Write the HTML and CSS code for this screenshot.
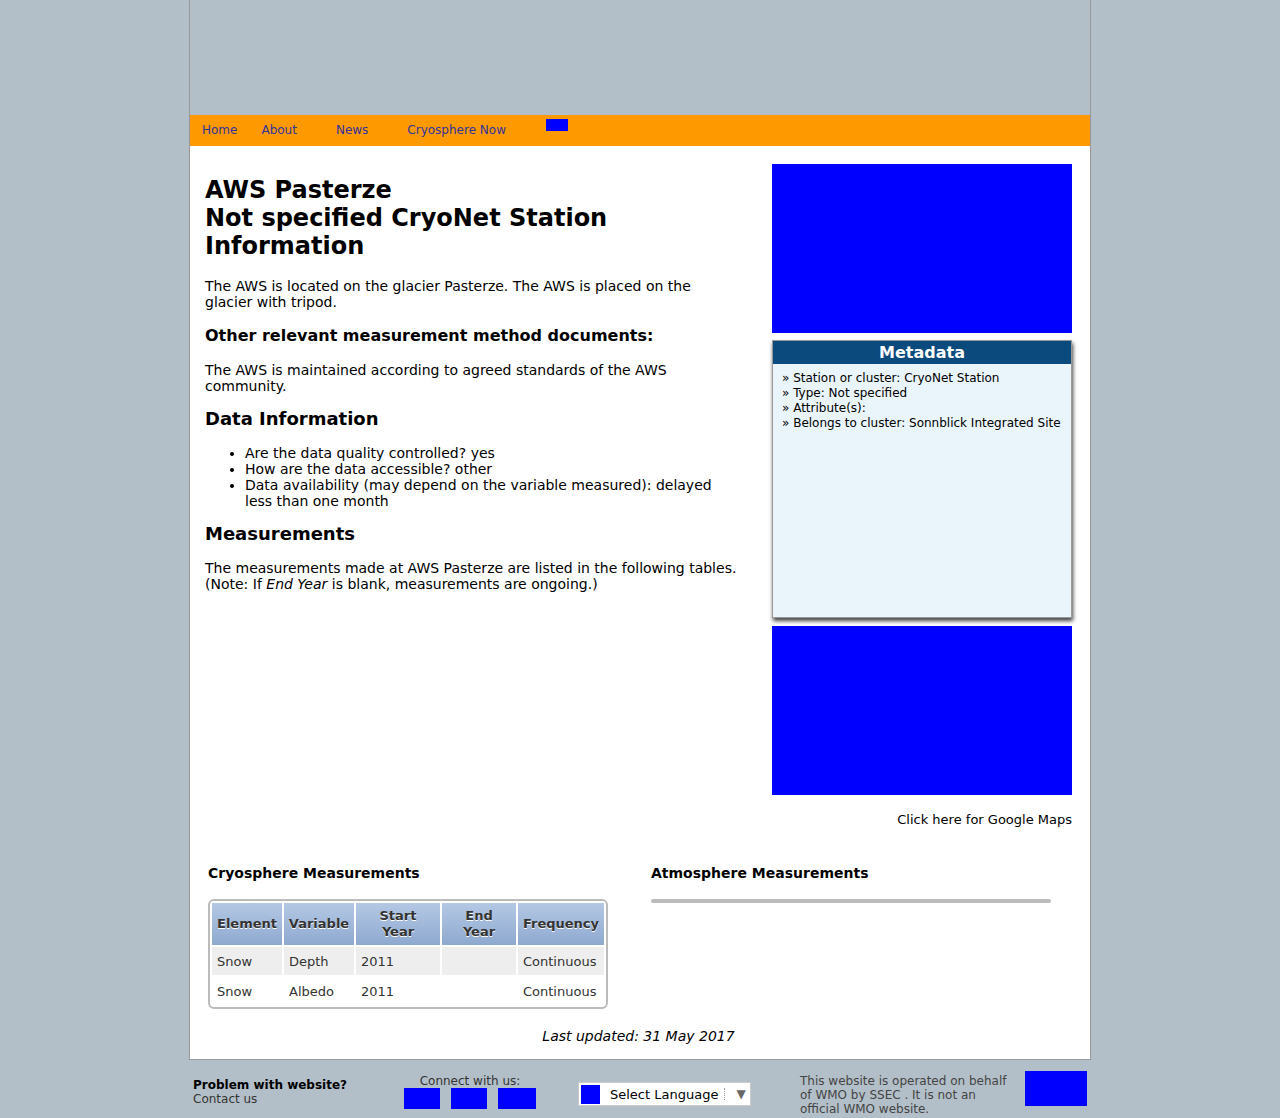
FILE: index.html
```html
<!DOCTYPE html>
<html>
<head>
<meta charset="utf-8">
<title>AWS Pasterze</title>
<link rel="stylesheet" href="styles.css">
</head>
<body>
<div class="page">
  <div class="header"></div>
  <div class="nav">
    <a class="nav-home" href="#">Home</a>
    <a class="nav-about" href="#">About</a>
    <a class="nav-news" href="#">News</a>
    <a class="nav-cryo" href="#">Cryosphere Now</a>
    <span class="nav-box"></span>
  </div>
  <div class="content">
    <div class="main">
      <div class="left">
        <h1>AWS Pasterze<br>Not specified CryoNet Station Information</h1>
        <p>The AWS is located on the glacier Pasterze. The AWS is placed on the glacier with tripod.</p>
        <h3>Other relevant measurement method documents:</h3>
        <p>The AWS is maintained according to agreed standards of the AWS community.</p>
        <h2>Data Information</h2>
        <ul>
          <li>Are the data quality controlled? yes</li>
          <li>How are the data accessible? other</li>
          <li>Data availability (may depend on the variable measured): delayed less than one month</li>
        </ul>
        <h2>Measurements</h2>
        <p>The measurements made at AWS Pasterze are listed in the following tables. (Note: If <em>End Year</em> is blank, measurements are ongoing.)</p>
      </div>
      <div class="right">
        <div class="bluebox"></div>
        <div class="meta">
          <div class="meta-head">Metadata</div>
          <ul class="meta-list">
            <li>» Station or cluster: CryoNet Station</li>
            <li>» Type: Not specified</li>
            <li>» Attribute(s):</li>
            <li>» Belongs to cluster: Sonnblick Integrated Site</li>
          </ul>
        </div>
        <div class="bluebox second"></div>
        <div class="maplink">Click here for Google Maps</div>
      </div>
    </div>
    <div class="tables">
      <div class="tcol">
        <h4>Cryosphere Measurements</h4>
        <div class="tablewrap">
          <table>
            <thead>
              <tr><th class="c1">Element</th><th class="c2">Variable</th><th class="c3">Start<br>Year</th><th class="c4">End<br>Year</th><th class="c5">Frequency</th></tr>
            </thead>
            <tbody>
              <tr class="odd"><td>Snow</td><td>Depth</td><td>2011</td><td></td><td>Continuous</td></tr>
              <tr><td>Snow</td><td>Albedo</td><td>2011</td><td></td><td>Continuous</td></tr>
            </tbody>
          </table>
        </div>
      </div>
      <div class="tcol tcol-right">
        <h4>Atmosphere Measurements</h4>
        <div class="emptybar"></div>
      </div>
    </div>
    <div class="updated"><em>Last updated: 31 May 2017</em></div>
  </div>
</div>
<div class="footer">
  <div class="f-problem"><b>Problem with website?</b><br>Contact us</div>
  <div class="f-connect">
    <div>Connect with us:</div>
    <div class="f-icons"><span class="ic ic1"></span><span class="ic ic2"></span><span class="ic ic3"></span></div>
  </div>
  <div class="f-lang"><span class="lang-icon"></span><span class="lang-text">Select Language</span><span class="lang-sep"></span><span class="lang-arrow">▼</span></div>
  <div class="f-op">This website is operated on behalf of WMO by SSEC . It is not an official WMO website.</div>
  <div class="f-logo"></div>
</div>
</body>
</html>
```

FILE: styles.css
```css
html, body {
  margin: 0;
  padding: 0;
}
body {
  background: #b3bfc8;
  font-family: "DejaVu Sans", sans-serif;
  color: #000;
}
.page {
  width: 900px;
  margin: 0 auto;
  border-left: 1px solid #999;
  border-right: 1px solid #999;
  border-bottom: 1px solid #999;
}
.header {
  height: 115px;
}
.nav {
  height: 31px;
  box-sizing: border-box;
  padding-bottom: 2px;
  background: #ff9900;
  display: flex;
  align-items: center;
  font-size: 12px;
}
.nav a {
  color: #333399;
  text-decoration: none;
}
.nav-home { margin-left: 12px; }
.nav-about { margin-left: 24px; }
.nav-news { margin-left: 39px; }
.nav-cryo { margin-left: 39px; }
.nav-box {
  width: 22px;
  height: 12px;
  background: #0000ff;
  margin-left: 40px;
  align-self: flex-start;
  margin-top: 4px;
}
.content {
  background: #fff;
  padding: 18px 18px 15px 15px;
}
.main {
  display: flex;
  justify-content: space-between;
}
.left {
  width: 535px;
  font-size: 14px;
  line-height: 16px;
}
.left h1 {
  font-size: 24px;
  line-height: 28px;
  margin: 12px 0 18px;
}
.left p {
  margin: 0;
}
.left h3 {
  font-size: 16px;
  line-height: 20px;
  margin: 16px 0 16px;
}
.left h2 {
  font-size: 18px;
  line-height: 22px;
  margin: 14px 0 15px;
}
.left ul {
  margin: 0;
  padding-left: 40px;
}
.right {
  width: 300px;
}
.bluebox {
  height: 169px;
  background: #0000ff;
}
.bluebox.second {
  margin-top: 8px;
}
.meta {
  margin-top: 7px;
  height: 276px;
  border: 1px solid #999;
  background: #eaf4fb;
  box-shadow: 1px 3px 4px #444;
}
.meta-head {
  background: #0b4a7d;
  color: #fff;
  font-weight: bold;
  font-size: 16px;
  line-height: 23px;
  text-align: center;
}
.meta-list {
  list-style: none;
  margin: 7px 0 0;
  padding: 0 0 0 9px;
  font-size: 12px;
  line-height: 15px;
}
.maplink {
  text-align: right;
  font-size: 13px;
  margin-top: 17px;
}
.tables {
  display: flex;
  margin-top: 38px;
  padding-left: 3px;
}
.tcol {
  width: 443px;
  flex-shrink: 0;
}
.tcol-right {
  width: auto;
  flex: 1;
}
.tcol h4 {
  font-size: 14px;
  line-height: 16px;
  margin: 0 0 18px;
}
.tablewrap {
  width: 396px;
  border: 2px solid #bbb;
  border-radius: 6px;
}
table {
  border-collapse: separate;
  border-spacing: 2px;
  table-layout: fixed;
  width: 396px;
  font-size: 13px;
  color: #333;
}
th {
  height: 42px;
  padding: 0 4px;
  background: linear-gradient(#b4c8e4, #8ea9cf);
  color: #333;
  text-shadow: 0 1px 0 #fff;
  font-weight: bold;
  line-height: 16px;
  text-align: center;
}
th.c1 { width: 62px; }
th.c2 { width: 62px; }
th.c3 { width: 76px; }
th.c4 { width: 66px; }
th.c5 { width: 78px; }
td {
  height: 28px;
  padding: 0 5px;
  text-align: left;
}
tr.odd td {
  background: #eee;
}
.emptybar {
  width: 400px;
  height: 4px;
  background: #bbb;
  border-radius: 2px;
}
.updated {
  text-align: center;
  font-size: 14px;
  margin-top: 19px;
}
.footer {
  width: 900px;
  margin: 0 auto;
  display: flex;
  align-items: flex-start;
  font-size: 12px;
  color: #333;
  height: 58px;
}
.f-problem {
  margin-left: 3px;
  margin-top: 18px;
  width: 207px;
  line-height: 14px;
}
.f-problem b {
  color: #000;
}
.f-connect {
  width: 140px;
  text-align: center;
  margin-top: 14px;
  line-height: 14px;
}
.f-icons {
  display: flex;
  justify-content: center;
  gap: 11px;
}
.ic {
  width: 36px;
  height: 21px;
  background: #0000ff;
}
.ic3 { width: 38px; }
.f-lang {
  margin-left: 38px;
  margin-top: 22px;
  width: 171px;
  height: 22px;
  background: #fff;
  border: 1px solid #ccc;
  display: flex;
  align-items: center;
  font-size: 13px;
  color: #000;
}
.lang-icon {
  width: 19px;
  height: 19px;
  background: #0000ff;
  margin-left: 2px;
}
.lang-text {
  margin-left: 10px;
}
.lang-sep {
  width: 1px;
  height: 12px;
  border-left: 1px dotted #999;
  margin-left: 6px;
}
.lang-arrow {
  color: #666;
  margin-left: 10px;
  font-size: 12px;
}
.f-op {
  margin-left: 49px;
  margin-top: 14px;
  width: 212px;
  line-height: 14px;
  color: #444;
}
.f-logo {
  margin-left: 13px;
  margin-top: 11px;
  width: 62px;
  height: 35px;
  background: #0000ff;
}
```
